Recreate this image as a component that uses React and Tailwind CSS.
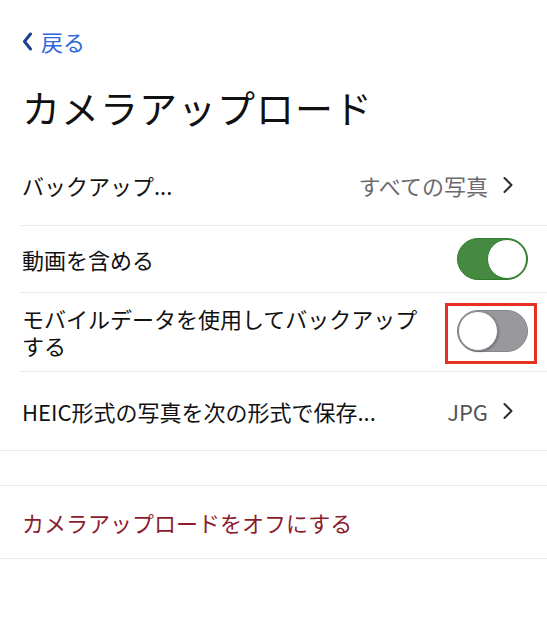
import React from "react";

const font = { fontFamily: '"Noto Sans CJK JP", "Noto Sans", sans-serif' };

function Chevron() {
    return (
        <svg width="12" height="18" viewBox="0 0 12 18" className="shrink-0">
            <path d="M2.5 2 L9.5 9 L2.5 16" fill="none" stroke="#2b2b2b" strokeWidth="2" strokeLinecap="round" strokeLinejoin="round" />
        </svg>
    );
}

function Toggle({ on }) {
    if (on) {
        return (
            <div className="w-[71px] h-[42px] rounded-full bg-[#468a42] border-[1.5px] border-[#2e7d2d] flex items-center justify-end">
                <div className="w-[40px] h-[40px] rounded-full bg-white border-[1.5px] border-[#2e7d2d]"></div>
            </div>
        );
    }
    return (
        <div className="w-[71px] h-[42px] rounded-full bg-[#99989d] border-[1.5px] border-[#88878c] flex items-center justify-start">
            <div className="w-[40px] h-[40px] rounded-full bg-white border-[1.5px] border-[#88878c] shadow-[1px_1px_2px_rgba(0,0,0,0.25)]"></div>
        </div>
    );
}

export default function App() {
    return (
        <div className="w-[547px] h-[640px] bg-white overflow-hidden text-[#111]" style={font}>
            {/* back */}
            <div className="pt-[27px] h-[55px] pl-[22px] flex items-center gap-[8px]">
                <svg width="11" height="19" viewBox="0 0 11 19">
                    <path d="M8.5 2 L2.5 9.5 L8.5 17" fill="none" stroke="#1d3f93" strokeWidth="3" strokeLinecap="round" strokeLinejoin="round" />
                </svg>
                <span className="text-[22px] leading-[28px] text-[#2e68dc]">戻る</span>
            </div>

            <h1 className="mt-[29px] pl-[22px] text-[38px] leading-[46px] font-normal tracking-[1px]">カメラアップロード</h1>

            <div className="mt-[15px]">
                <div className="h-[80px] pl-[22px] pr-[33px] flex items-center justify-between">
                    <span className="text-[22px]">バックアップ...</span>
                    <div className="flex items-center gap-[14px]">
                        <span className="text-[22px] text-[#6b6b6f]">すべての写真</span>
                        <Chevron />
                    </div>
                </div>
                <div className="ml-[20px] h-px bg-[#e8e8ea]"></div>

                <div className="h-[66px] pl-[22px] pr-[19px] flex items-center justify-between">
                    <span className="text-[22px]">動画を含める</span>
                    <Toggle on />
                </div>
                <div className="ml-[20px] h-px bg-[#e8e8ea]"></div>

                <div className="h-[78px] pl-[22px] pr-[10px] flex items-center justify-between">
                    <span className="text-[22px] leading-[27px]">
                        モバイルデータを使用してバックアップ<br />する
                    </span>
                    <div className="border-[3px] border-[#e4321f] pl-[9px] pr-[6px] pt-[4px] pb-[9px] mt-[3px]">
                        <Toggle on={false} />
                    </div>
                </div>
                <div className="ml-[20px] h-px bg-[#e8e8ea]"></div>

                <div className="h-[78px] pl-[22px] pr-[33px] flex items-center justify-between">
                    <span className="text-[22px]">HEIC形式の写真を次の形式で保存...</span>
                    <div className="flex items-center gap-[14px]">
                        <span className="text-[22px] text-[#555558]">JPG</span>
                        <Chevron />
                    </div>
                </div>
                <div className="h-px bg-[#e8e8ea]"></div>

                <div className="h-[34px]"></div>
                <div className="h-px bg-[#e8e8ea]"></div>

                <div className="h-[72px] pl-[22px] flex items-center">
                    <span className="text-[22px] text-[#8c1c2d]">カメラアップロードをオフにする</span>
                </div>
                <div className="h-px bg-[#e8e8ea]"></div>
            </div>
        </div>
    );
}
